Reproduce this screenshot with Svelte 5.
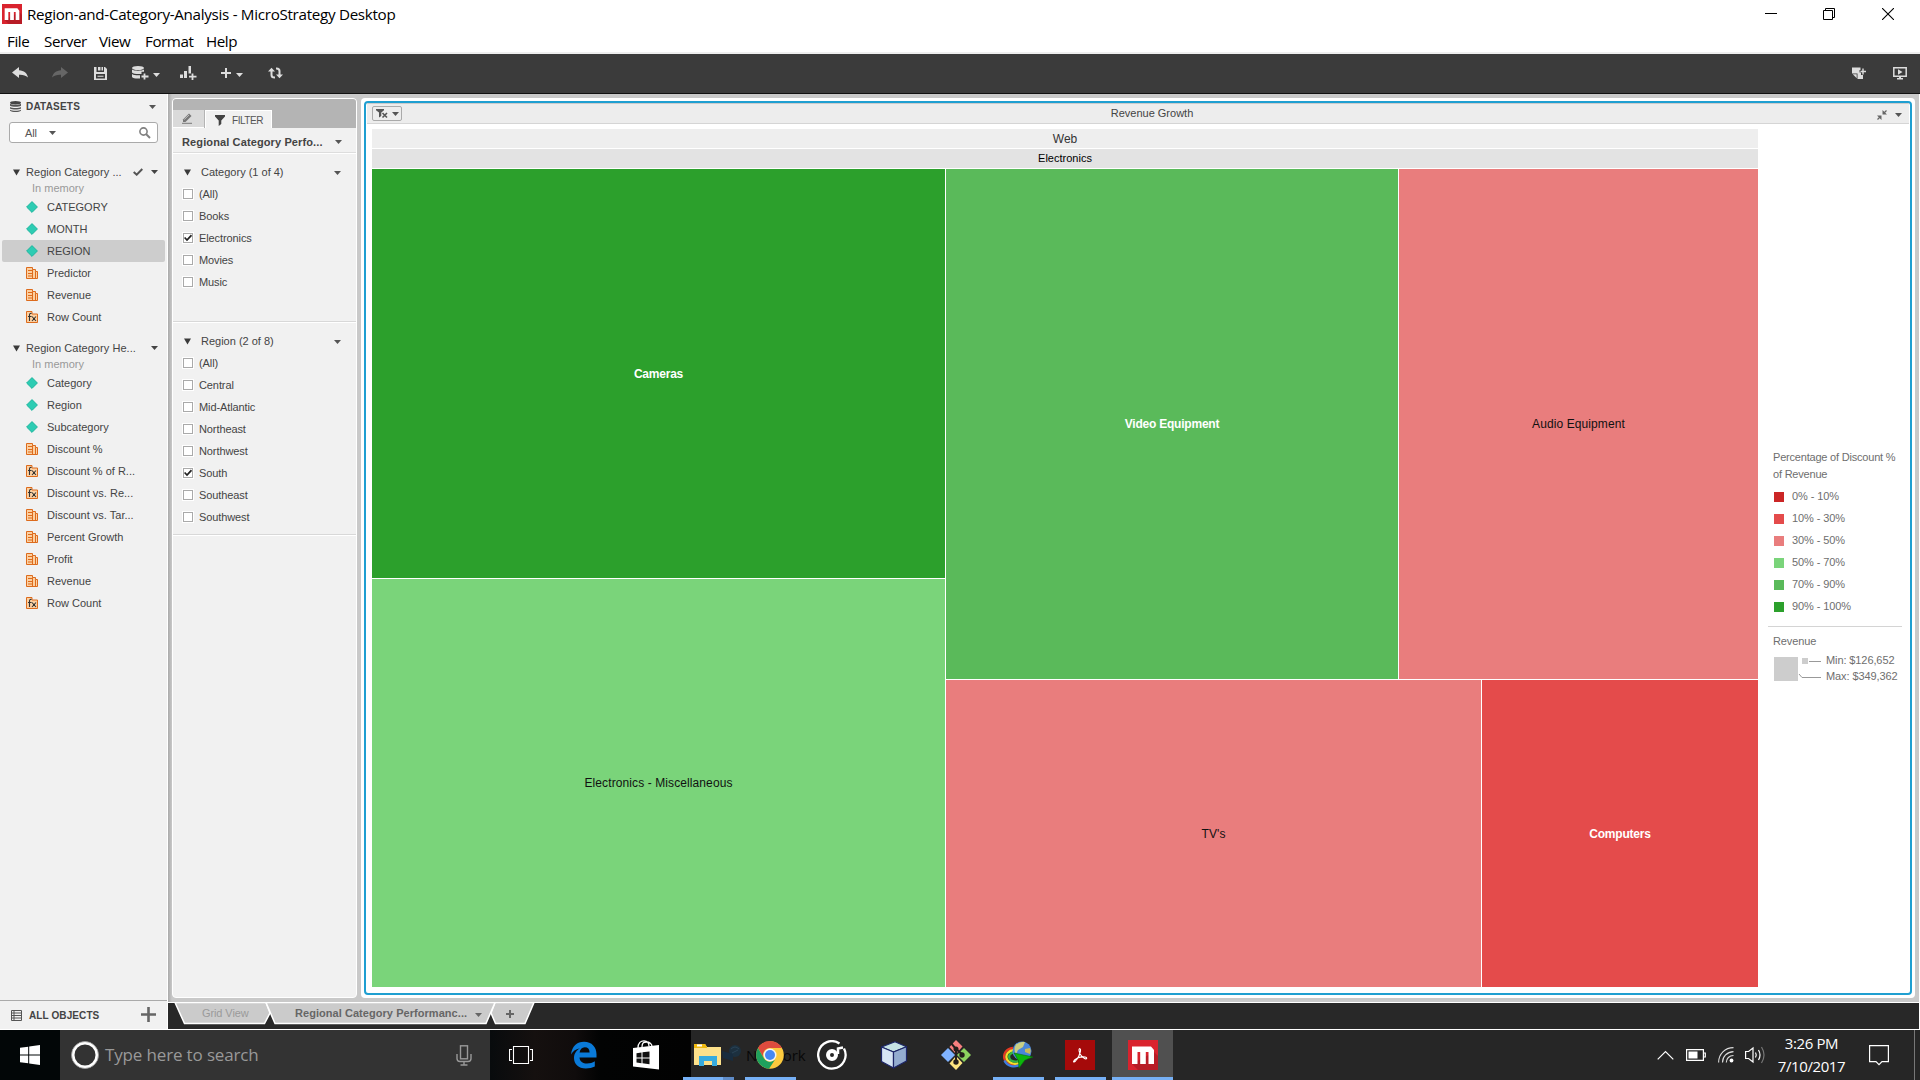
<script>
  const datasets = [
    {
      name: 'Region Category ...',
      checked: true,
      items: [
        ['attr', 'CATEGORY'],
        ['attr', 'MONTH'],
        ['attr', 'REGION', true],
        ['metric', 'Predictor'],
        ['metric', 'Revenue'],
        ['fx', 'Row Count']
      ]
    },
    {
      name: 'Region Category He...',
      checked: false,
      items: [
        ['attr', 'Category'],
        ['attr', 'Region'],
        ['attr', 'Subcategory'],
        ['metric', 'Discount %'],
        ['fx', 'Discount % of R...'],
        ['fx', 'Discount vs. Re...'],
        ['metric', 'Discount vs. Tar...'],
        ['metric', 'Percent Growth'],
        ['metric', 'Profit'],
        ['metric', 'Revenue'],
        ['fx', 'Row Count']
      ]
    }
  ];
  const filters = [
    { title: 'Category (1 of 4)', on: 'Electronics', cls: 'first', options: ['(All)', 'Books', 'Electronics', 'Movies', 'Music'] },
    {
      title: 'Region (2 of 8)', on: 'South', cls: 'second',
      options: ['(All)', 'Central', 'Mid-Atlantic', 'Northeast', 'Northwest', 'South', 'Southeast', 'Southwest']
    }
  ];
  const legend = [
    ['#cb2626', '0% - 10%'],
    ['#e44b4b', '10% - 30%'],
    ['#e97d7d', '30% - 50%'],
    ['#7ad47a', '50% - 70%'],
    ['#5aba5a', '70% - 90%'],
    ['#2ca02c', '90% - 100%']
  ];
</script>

{#snippet caret()}
  <svg class="caret" width="7" height="4" viewBox="0 0 7 4"><path d="M0 0h7L3.5 4z" fill="currentColor" /></svg>
{/snippet}

{#snippet tri()}
  <svg class="tri" width="7" height="7" viewBox="0 0 7 7"><path d="M0 .5h7L3.5 6.5z" fill="#3a3a3a" /></svg>
{/snippet}

{#snippet logo(size)}
  <svg width={size} height={size} viewBox="0 0 30 30">
    <rect width="30" height="30" fill="#d9232e" />
    <path d="M26 12l4 4v14H10l-6-6z" fill="#b81c26" />
    <path d="M4 24V6.500h19l3 3.500v14h-5.500V12h-2.700v12h-5.600V12H9.500v12z" fill="#fff" />
  </svg>
{/snippet}

<div class="screen">
  <header class="titlebar">
    <span class="applogo">{@render logo(20)}</span>
    <span class="apptitle">Region-and-Category-Analysis - MicroStrategy Desktop</span>
    <div class="winbtns">
      <svg width="12" height="12" viewBox="0 0 12 12"><path d="M0 5.500h12" stroke="#000" /></svg>
      <svg width="12" height="12" viewBox="0 0 12 12"><path d="M.5 2.500h9v9h-9zM2.500 2.500v-2h9v9h-2" fill="none" stroke="#000" /></svg>
      <svg class="close" width="12" height="12" viewBox="0 0 12 12"><path d="M0 0l12 12M12 0L0 12" stroke="#000" stroke-width="1.100" /></svg>
    </div>
  </header>
  <nav class="menubar">
    <span class="m1">File</span><span class="m2">Server</span><span class="m3">View</span><span class="m4">Format</span><span>Help</span>
  </nav>

  <div class="toolbar">
    <svg class="t-undo" width="16" height="12" viewBox="0 0 16 12"><path d="M0 5.500L7 0v3.200c5 .3 8 2.800 9 7.300-2.500-2.300-5-3-9-2.800v3.300z" fill="#ddd" /></svg>
    <svg class="t-redo" width="16" height="12" viewBox="0 0 16 12"><path d="M16 5.500L9 0v3.200C4 3.500 1 6 0 10.500c2.500-2.300 5-3 9-2.800v3.300z" fill="#666" /></svg>
    <svg class="t-save" width="13" height="13" viewBox="0 0 13 13"><path d="M0 0h2.500v5h7.500V0H11l2 2v11H0zM2 7v4.500h9V7z" fill="#ddd" fill-rule="evenodd" /><path d="M4 0h2.500v3.500H4zM7.500 0H9v3.500H7.500zM3.500 8.700h6v1h-6z" fill="#ddd" /></svg>
    <svg class="t-db" width="17" height="14" viewBox="0 0 17 14"><ellipse cx="6" cy="2" rx="6" ry="2" fill="#ddd" /><path d="M0 3.500c2 1.600 10 1.600 12 0v2.300H9.500V8C5 8.300 1 7.800 0 6.500zM0 8c2 1.300 5 1.500 8 1.300v3.200C4 12.800 1 12.300 0 11z" fill="#ddd" /><path d="M12.500 7.500v6M9.500 10.500h7" stroke="#ddd" stroke-width="1.800" /></svg>
    <span class="t-c1">{@render caret()}</span>
    <svg class="t-chart" width="17" height="14" viewBox="0 0 17 14"><path d="M0 8.500h3V12H0zM4 5h3v7H4zM8.500 0H11v7.500H8.500z" fill="#ddd" /><path d="M12.500 7.500v6.500M9 10.700h7.500" stroke="#ddd" stroke-width="1.800" /></svg>
    <svg class="t-plus" width="10" height="10" viewBox="0 0 10 10"><path d="M5 0v10M0 5h10" stroke="#ddd" stroke-width="2" /></svg>
    <span class="t-c2">{@render caret()}</span>
    <svg class="t-sync" width="15" height="12" viewBox="0 0 15 12"><path d="M3.500 4v4q0 2.500 3 2.500H7M11.500 8V4q0-2.500-3-2.500H8" fill="none" stroke="#ddd" stroke-width="2" /><path d="M0 4.500L3.500.700 7 4.500zM8 7.500l3.500 3.800L15 7.500z" fill="#ddd" /></svg>
    <span class="spacer"></span>
    <svg class="t-note" width="14" height="13" viewBox="0 0 14 13"><path d="M0 .500h8.500v2.500H7.500v2.500h1.500V8h2v4H5.500V6.500H0z" fill="#ddd" /><path d="M.8 7.300h3.900v3.900z" fill="#ddd" /><path d="M11 1.500v6M8.500 4.500h5.500" stroke="#ddd" stroke-width="1.400" /></svg>
    <svg class="t-tv" width="14" height="13" viewBox="0 0 14 13"><path d="M.8.800h12.400v8.400H.8z" fill="none" stroke="#ddd" stroke-width="1.500" /><path d="M5 2.200L9.500 5 5 7.700zM4 11h6v1.500H4zM6 9h2v2H6z" fill="#ddd" /></svg>
  </div>

  <main class="work">
    <aside class="datasets">
      <div class="ds-head">
        <svg width="11" height="11" viewBox="0 0 11 11"><ellipse cx="5.500" cy="1.700" rx="5.500" ry="1.700" fill="#444" /><path d="M0 2.800c2 1.400 9 1.400 11 0v2c-2 1.400-9 1.400-11 0zM0 6c2 1.400 9 1.400 11 0v1.500c-2 1.400-9 1.400-11 0zM0 8.700c2 1.400 9 1.400 11 0v1c-2 1.700-9 1.700-11 0z" fill="#555" /></svg>
        <b>DATASETS</b>
        {@render caret()}
      </div>
      <div class="search">
        <span>All</span>{@render caret()}
        <svg class="mag" width="12" height="12" viewBox="0 0 12 12"><circle cx="4.500" cy="4.500" r="3.600" fill="none" stroke="#808080" stroke-width="1.600" /><path d="M7 7l4 4" stroke="#808080" stroke-width="2" /></svg>
      </div>
      {#each datasets as ds}
        <section class="ds">
          <div class="ds-name">
            {@render tri()}<span>{ds.name}</span>
            {#if ds.checked}<svg class="tick" width="10" height="8" viewBox="0 0 10 8"><path d="M.7 4L3.700 6.700 9.300 1" fill="none" stroke="#555" stroke-width="2" /></svg>{/if}
            {@render caret()}
          </div>
          <div class="mem">In memory</div>
          {#each ds.items as [kind, label, sel]}
            <div class="item" class:sel>
              <svg width="12" height="12" viewBox="0 0 12 12">
                {#if kind === 'attr'}
                  <path d="M6 .600L11.400 6 6 11.400.6 6z" fill="#2dccb3" stroke="#1eb59d" />
                {:else}
                  <path d={kind === 'metric' ? 'M.5.500h6v2h3v2h2v7H.5z' : 'M.5.500h5.500v2.500h5.500v8.500H.5z'} fill="#fcd0a1" stroke="#dd6b1c" />
                  {#if kind === 'metric'}
                    <path d="M2 3.500h4M2 6.500h4M2 9h4M6.500 2.500v9M9.500 4.500v7" stroke="#dd6b1c" fill="none" />
                  {:else}
                    <path d="M5.500 2.500q-2-.5-2 1.500v6M2 5.500h3.500M6 5.500l4 4.500M10 5.500L6 10" fill="none" stroke="#333" stroke-width="1.100" />
                  {/if}
                {/if}
              </svg>
              <span>{label}</span>
            </div>
          {/each}
        </section>
      {/each}
      <footer class="all-objects">
        <svg width="11" height="11" viewBox="0 0 11 11"><path d="M.5.500h10v10H.5zM0 3h11M0 5.500h11M0 8h11M3 0v11" fill="none" stroke="#555" /></svg>
        <b>ALL OBJECTS</b>
        <svg class="add" width="15" height="15" viewBox="0 0 15 15"><path d="M7.500 0v15M0 7.500h15" stroke="#666" stroke-width="2.600" /></svg>
      </footer>
    </aside>

    <div class="stage">
      <div class="panels">
        <aside class="filter">
          <div class="ftabs">
            <div class="ftab edit">
              <svg width="12" height="11" viewBox="0 0 12 11"><path d="M1 6.500L7 .500l2.500 2.500-6 6H1z" fill="#777" /><path d="M2.300 6.500L7 2" stroke="#ddd" stroke-width=".7" /><path d="M0 10.300h10" stroke="#777" /></svg>
            </div>
            <div class="ftab active">
              <svg width="10" height="11" viewBox="0 0 10 11"><path d="M0 0h10v1.500L6.300 5.500V9L3.700 11V5.500L0 1.500z" fill="#444" /></svg>
              FILTER
            </div>
          </div>
          <div class="ftitle"><b>Regional Category Perfo...</b>{@render caret()}</div>
          {#each filters as f}
            <section class="fgroup {f.cls}">
              <div class="fhead">{@render tri()}<span>{f.title}</span>{@render caret()}</div>
              {#each f.options as o}
                <div class="opt">
                  <i class="box">{#if o === f.on}<svg width="8" height="8" viewBox="0 0 8 8"><path d="M.6 3.500L3 6 7.500 1.200" fill="none" stroke="#222" stroke-width="1.700" /></svg>{/if}</i>{o}
                </div>
              {/each}
            </section>
          {/each}
        </aside>

        <section class="card">
          <div class="viz">
            <div class="vhead">
              <div class="tx">
                <svg width="13" height="10" viewBox="0 0 13 10"><path d="M0 0h8v1.300L5.300 3.500V7L3 8.500v-5L0 1.300z" fill="#555" /><path d="M6.500 4l4.500 4.500M11 4L6.500 8.500" stroke="#555" stroke-width="1.600" /></svg>
                {@render caret()}
              </div>
              <span class="vtitle">Revenue Growth</span>
              <div class="vtools">
                <svg width="10" height="10" viewBox="0 0 10 10"><path d="M5.500 0v4.500H10zM4.500 10V5.500H0z" fill="#666" /><path d="M6.500 3.500L9.500.5M.5 9.500l3-3" stroke="#666" stroke-width="1.300" /></svg>
                {@render caret()}
              </div>
            </div>
            <div class="vbody">
              <div class="map">
                <div class="h1">Web</div>
                <div class="h2">Electronics</div>
                <div class="tree">
                  <div class="colA">
                    <div class="tile g3 w"><span>Cameras</span></div>
                    <div class="tile g1"><span>Electronics - Miscellaneous</span></div>
                  </div>
                  <div class="colB">
                    <div class="rowTop">
                      <div class="tile g2 w"><span>Video Equipment</span></div>
                      <div class="tile r1"><span>Audio Equipment</span></div>
                    </div>
                    <div class="rowBot">
                      <div class="tile r1"><span>TV's</span></div>
                      <div class="tile r2 w"><span>Computers</span></div>
                    </div>
                  </div>
                </div>
              </div>
              <div class="legend">
                <div class="lt">Percentage of Discount %<br />of Revenue</div>
                {#each legend as [color, label]}
                  <div class="li"><i style="background:{color}"></i>{label}</div>
                {/each}
                <div class="lsize">
                  <div class="ls-t">Revenue</div>
                  <div class="ls-row">
                    <svg width="48" height="26" viewBox="0 0 48 26"><path d="M0 0h24v24H0zM28 1h6v6h-6z" fill="#cdcdcd" /><path d="M35 4.500h12M25 17l3 3.500h19" fill="none" stroke="#999" /></svg>
                    <div class="ls-x"><span>Min: $126,652</span><span>Max: $349,362</span></div>
                  </div>
                </div>
              </div>
            </div>
          </div>
        </section>
      </div>

      <div class="tabs">
        <svg class="tabshape" width="380" height="27" viewBox="0 0 380 27">
          <g fill="#cbcbcb" stroke="#fff" stroke-width="1.500">
            <path d="M8 .5L17.500 21.500H97.500L103 11 99 .5z" />
            <path d="M324 11L328.500 21.500H358L367 .5H328z" />
            <path d="M99 .5L108 21.500H319L328 .5z" />
          </g>
        </svg>
        <span class="tab a">Grid View</span>
        <b class="tab b">Regional Category Performanc...</b>
        <span class="tcar">{@render caret()}</span>
        <svg class="tadd" width="8" height="8" viewBox="0 0 8 8"><path d="M4 0v8M0 4h8" stroke="#666" stroke-width="2" /></svg>
      </div>
    </div>
  </main>

  <footer class="taskbar">
    <div class="start"><svg width="20" height="20" viewBox="0 0 20 20"><path d="M0 2.800L8.200 1.700v7.800H0zM9.200 1.500L20 0v9.500H9.200zM0 10.500h8.200v7.800L0 17.200zM9.200 10.500H20V20L9.200 18.500z" fill="#fff" /></svg></div>
    <div class="cortana">
      <svg width="28" height="28" viewBox="0 0 28 28"><circle cx="14" cy="14" r="12" fill="none" stroke="#fff" stroke-width="3" /><circle cx="14" cy="14" r="13.500" fill="none" stroke="#999" stroke-width=".8" /></svg>
      <span>Type here to search</span>
      <svg class="mic" width="16" height="21" viewBox="0 0 16 21"><rect x="4.500" y=".8" width="7" height="13" fill="none" stroke="#999" stroke-width="1.400" /><path d="M1 9v4.500q0 3 3 3h8q3 0 3-3V9M8 16.500V20M4.500 20h7" fill="none" stroke="#999" stroke-width="1.400" /></svg>
    </div>
    <div class="apps">
      <div class="app"><svg class="tv" width="24" height="20" viewBox="0 0 24 20"><path d="M4.500 1.500h15v17h-15zM3 4.500H.5v11H3M21 4.500h2.500v11H21" fill="none" stroke="#fff" stroke-width="1.100" /></svg></div>
      <div class="app"><svg width="26" height="28" viewBox="0 0 26 28"><path d="M0 13.500C1 5 6 .8 13 .8c8 0 12.500 5.500 12.500 12.500v3.200H8.500c.3 4 3.500 6 7.500 6 3 0 5.500-.8 7.800-2.200v5.200C21.500 26.800 18 27.500 14.800 27.500 7.500 27.500 3 23 3 17c0-4.500 2.500-8 6-9.800C4.500 8 1.500 10.500 0 13.500zM8.600 11.500h10c0-3.500-1.800-5.300-4.800-5.300-3 0-4.800 2.300-5.200 5.300z" fill="#0a7ad8" /></svg></div>
      <div class="app"><svg width="26" height="30" viewBox="0 0 26 30"><path d="M0 8l26-3v24.500L0 26.500z" fill="#fff" /><path d="M5 8C5 2.500 8 .8 11 .8c3.500 0 5 2.500 5 5.500M9 7C9 2.500 11 2 13.500 2 16.500 2 19 4 19 6.500" fill="none" stroke="#fff" stroke-width="1.300" /><path d="M3.500 13.200l5-.7v5h-5zM9.500 12.300l7-.9v6.100h-7zM3.500 18.500h5v4.700l-5-.6zM9.500 18.500h7v5.700l-7-.9z" fill="#111" /></svg></div>
      <div class="app"><u class="two"></u><svg width="28" height="24" viewBox="0 0 28 24"><path d="M0 1h11l2 3h14v18H0z" fill="#fde18b" /><path d="M0 1h11l2 3v1H0z" fill="#f0b90f" /><path d="M3 2.500h5" stroke="#fff" stroke-width="2" /><path d="M5 23V13h18v10h-5v-5h-8v5z" fill="#36abdf" /></svg></div>
      <div class="app">
        <u></u>
        <svg class="dim" width="20" height="18" viewBox="0 0 20 18"><circle cx="13" cy="6" r="6" fill="#1c303f" /><path d="M0 6l11 3v7L1 13z" fill="#182c3e" /><path d="M9 4q4-4 8 0M10 8l6-3" stroke="#2a4356" fill="none" /></svg>
        <span class="ghost">Network</span>
        <svg class="top" width="28" height="28" viewBox="0 0 28 28"><circle cx="14" cy="14" r="13.800" fill="#fcca3e" /><path d="M2 7A13.800 13.800 0 0 1 26 7H14a7 7 0 0 0-6 10.500z" fill="#dd4b3e" /><path d="M2 7A13.800 13.800 0 0 0 13 27.800L19.500 18A7 7 0 0 1 8 17.500z" fill="#1fa15d" /><circle cx="14" cy="14" r="6.500" fill="#f4f4f4" /><circle cx="14" cy="14" r="5" fill="#4688f4" /></svg>
      </div>
      <div class="app"><svg width="30" height="30" viewBox="0 0 30 30"><path d="M22.500 3.500A13.700 13.700 0 1 0 27 8.500" fill="none" stroke="#fff" stroke-width="2.300" /><circle cx="15" cy="15" r="4" fill="none" stroke="#fff" stroke-width="4" /><path d="M21 14V8.500l5-1" fill="none" stroke="#fff" stroke-width="2.500" /></svg></div>
      <div class="app"><svg width="28" height="28" viewBox="0 0 28 28"><g stroke="#1d2668" stroke-width="1.200" stroke-linejoin="round"><path d="M1.500 6L15 .8l11.500 5L13.500 11z" fill="#c5e2e4" /><path d="M1.500 6l12 5v16L1.500 20.500z" fill="#d6e5f4" /><path d="M26.500 5.800V20L13.500 27V11z" fill="#93acd0" /></g></svg></div>
      <div class="app"><svg width="30" height="30" viewBox="0 0 30 30"><path d="M15 0l6.500 6.500L15 14 8.500 7z" fill="#f97f7f" /><path d="M7 8l7 7-7 7-7-7z" fill="#80b3ff" /><path d="M23 8l7 7-7 7-7-7z" fill="#8dd35f" /><path d="M15 16l6.500 7L15 30l-6.500-6.500z" fill="#ffe680" /><path d="M10 3l5 6v15M15 9l7 6" fill="none" stroke="#241f1c" stroke-width="2" /><g fill="#241f1c"><circle cx="15" cy="9" r="2.500" /><circle cx="21" cy="15" r="2.700" /><circle cx="15" cy="22" r="2.700" /></g></svg></div>
      <div class="app"><u></u><svg width="30" height="28" viewBox="0 0 30 28"><g fill="none" stroke-width="2.300"><path d="M10 7C3 8 0 13 1.500 18s8 8.500 15 5" stroke="#e33a22" /><path d="M11 9c-6 1-8.500 4.500-7.300 8.500s7 6.500 12 4.500" stroke="#f3df2c" /><path d="M12 11c-5 1-6.500 3-5.700 6s5 4.500 9 3" stroke="#35b443" /><path d="M1.500 19.500C4 25.500 12 27 17 23.500" stroke="#3c7ee0" /></g><circle cx="19" cy="10" r="9.500" fill="#4a86d8" /><path d="M13 3.500q5-3.500 9-2.500l-2 5-5 3-2 4q-3-5 0-9.500z" fill="#c9cf83" /><path d="M22 8l5-1q1.500 3 0 6l-5-2z" fill="#c9b95b" /><path d="M11 12l19 4-8 3-6 8-.5-7z" fill="#0cb50c" stroke="#0a6d0a" stroke-width=".6" /></svg></div>
      <div class="app"><u></u><svg width="30" height="30" viewBox="0 0 30 30"><rect width="30" height="30" fill="#a50a0a" /><path d="M8.500 21.500c1-3 6-5 11.500-4.500 3 .5 1.500 2.700-.5 1.500-3-1.500-5.500-5.500-5.500-8.500 0-2.200 2-1.500 1.500.8-.6 3.500-3 8-5 10.200-1.200 1.200-2.200 1-2 .5z" fill="none" stroke="#fff" stroke-width="1.100" /></svg></div>
      <div class="app cur"><u></u>{@render logo(30)}</div>
    </div>
    <span class="spacer"></span>
    <div class="tray">
      <svg class="y1" width="17" height="10" viewBox="0 0 17 10"><path d="M.7 9.300L8.500 1.500l7.800 7.800" fill="none" stroke="#fff" stroke-width="1.200" /></svg>
      <svg class="y2" width="20" height="12" viewBox="0 0 20 12"><path d="M.6.600h16.800v10.800H.6zM18 4h1.300v4H18" fill="none" stroke="#fff" stroke-width="1.200" /><path d="M2.500 2.500h9v7h-9z" fill="#fff" /></svg>
      <svg class="y3" width="16" height="16" viewBox="0 0 16 16"><g fill="none" stroke="#ddd" stroke-width="1.100"><path d="M.6 15.500C.6 7 7 .6 15.500.600M4.500 15.500C4.500 9.500 9 5 15.500 4.600M8.300 15.500c0-4 3-7 7.200-7" /></g><circle cx="13.500" cy="13.500" r="1.900" fill="#fff" /></svg>
      <svg class="y4" width="21" height="18" viewBox="0 0 21 18"><path d="M.6 5.500h3L8 2v14L3.600 12.500h-3z" fill="none" stroke="#fff" stroke-width="1.200" /><path d="M10.500 6.500q1.500 2.500 0 5M13.500 4q3 5 0 10" fill="none" stroke="#fff" stroke-width="1.200" /><path d="M16.500 1q5 8 0 16" fill="none" stroke="#777" stroke-width="1.200" /></svg>
      <div class="clock"><span>3:26 PM</span><span>7/10/2017</span></div>
      <svg class="y5" width="20" height="21" viewBox="0 0 20 21"><path d="M.6.600h18.800v16H13l-3 3-3-3H.6z" fill="none" stroke="#fff" stroke-width="1.200" /></svg>
    </div>
  </footer>
</div>

<style>
  :global(body) { background: #fff; overflow: hidden; }
  .screen { width: 1920px; height: 1080px; display: flex; flex-direction: column; font: 11px/22px "Liberation Sans", Arial, sans-serif; color: #444; overflow: hidden; }
  .screen * { box-sizing: border-box; }
  svg { display: block; flex: none; }
  b, span { white-space: nowrap; }
  .spacer { flex: 1; }
  .caret, .tri { flex: none; }
  .titlebar { height: 29px; display: flex; align-items: center; font: 15.200px/26px "Open Sans", "Noto Sans", sans-serif; color: #000; padding: 0 0 1px 2px; }
  .applogo { margin-right: 5px; }
  .apptitle { letter-spacing: -.3px; padding-bottom: 1px; }
  .winbtns { margin-left: auto; display: flex; gap: 46px; padding-right: 26px; }
  .close { margin-left: 1px; }
  .menubar { height: 25px; display: flex; padding-left: 7px; font: 15.200px/25px "Open Sans", "Noto Sans", sans-serif; letter-spacing: -.44px; color: #000; border-bottom: 2px solid #eee; }
  .menubar span { line-height: 24px; }
  .m1 { width: 37px; } .m2 { width: 55px; } .m3 { width: 46px; } .m4 { width: 61px; }
  .toolbar { height: 40px; background: #3b3b3b; border-bottom: 1px solid #111; display: flex; align-items: center; padding: 0 13px 1px 12px; color: #ddd; }
  .t-redo { margin-left: 24px; } .t-save { margin-left: 26px; } .t-db { margin-left: 25px; }
  .t-c1 { margin: 3px 0 0 4px; } .t-chart { margin-left: 20px; } .t-plus { margin-left: 24px; } .t-c2 { margin: 3px 0 0 5px; } .t-sync { margin-left: 25px; } .t-tv { margin-left: 27px; }
  .t-c1, .t-c2 { height: 4px; }

  .work { height: 935px; display: flex; }
  .datasets { width: 168px; background: #f1f1f1; border-right: 1px solid #fff; display: flex; flex-direction: column; color: #555; }
  .ds-head { height: 28px; padding: 0 11px 3px 10px; display: flex; align-items: center; }
  .ds-head b { margin: 0 auto 0 5px; color: #444; font-size: 10px; letter-spacing: .2px; }
  .search { margin: 0 9px 18px; height: 21px; border: 1px solid #aaa; border-radius: 3px; background: #fff; display: flex; align-items: center; padding: 0 6px 0 15px; gap: 12px; }
  .mag { margin-left: auto; }
  .search span { letter-spacing: -.1px; }
  .ds { margin-bottom: 9px; }
  .ds-name { height: 22px; display: flex; align-items: center; padding: 0 9px 0 13px; color: #444; letter-spacing: .05px; }
  .ds-name span { margin: 0 auto 0 6px; }
  .tick { margin-right: 8px; }
  .mem { height: 13px; line-height: 11px; padding-left: 32px; color: #999; letter-spacing: 0; }
  .item { height: 22px; margin: 0 2px; border-radius: 2px; padding-left: 24px; display: flex; align-items: center; gap: 9px; color: #444; }
  .sel { background: #cdcdcd; }
  .all-objects { margin-top: auto; height: 29px; border-top: 1px solid #aaa; display: flex; align-items: center; padding: 1px 11px 0; }
  .all-objects b { margin: 0 auto 0 7px; font-size: 10px; letter-spacing: .1px; color: #444; }
  .add { margin-top: -2px; }

  .stage { flex: 1; background: #c9c9c9; display: flex; flex-direction: column; min-width: 0; border-right: 1px solid #fff; }
  .panels { height: 908px; padding: 4px 4px 4px 4px; display: flex; gap: 4px; background: linear-gradient(90deg, #aaa, #c9c9c9 4px); }
  .filter { width: 185px; border: 1px solid #fff; border-radius: 4px; background: #f1f1f1; overflow: hidden; }
  .ftabs { height: 29px; background: #b4b4b4; display: flex; align-items: flex-end; gap: 1px; }
  .ftab { height: 18px; display: flex; align-items: center; }
  .edit { width: 31px; background: #dadada; padding-left: 9px; border-bottom: 1px solid #fff; }
  .active { width: 67px; background: #f1f1f1; border: 1px solid #fff; border-bottom: 0; padding: 2px 0 0 9px; gap: 7px; font-size: 10px; letter-spacing: -.45px; color: #555; }
  .ftitle { height: 26px; display: flex; align-items: center; justify-content: space-between; padding: 2px 14px 0 9px; letter-spacing: .12px; border-bottom: 1px solid #fff; box-shadow: inset 0 -1px #ddd; color: #555; }
  .ftitle b { color: #444; }
  .fgroup { border-bottom: 1px solid #fff; box-shadow: inset 0 -1px #d8d8d8; }
  .first { height: 169px; padding-top: 7px; }
  .second { height: 213px; padding-top: 7px; }
  .fhead { height: 22px; display: flex; align-items: center; padding: 0 15px 0 11px; color: #555; }
  .fhead span { margin: 0 auto 0 10px; color: #444; }
  .fhead .caret, .fhead :global(.caret) { margin-top: 2px; }
  .opt { height: 22px; display: flex; align-items: center; padding-left: 10px; color: #444; letter-spacing: -.1px; }
  .box { width: 10px; height: 10px; border: 1px solid #aaa; background: #fff; outline: 1px solid #fff; margin-right: 6px; flex: none; }

  .card { flex: 1; background: #fff; border-radius: 4px; padding: 3px; min-width: 0; }
  .viz { height: 894px; border: 2px solid #1f9fd1; border-radius: 4px; overflow: hidden; }
  .vhead { height: 21px; margin: 0 1px; background: #ededed; border-bottom: 1px solid #d5d5d5; border-top: 1px solid #ccc; display: grid; grid-template-columns: 1fr auto 1fr; align-items: center; color: #555; }
  .tx { width: 30px; height: 15px; margin-left: 5px; border: 1px solid #aaa; border-radius: 2px; display: flex; align-items: center; padding-left: 3px; gap: 3px; }
  .vtitle { color: #444; padding-left: 28px; line-height: 18px; margin-top: -1px; }
  .vtools { display: flex; align-items: center; justify-content: flex-end; gap: 8px; padding-right: 7px; padding-top: 2px; }
  .vbody { display: flex; padding: 5px 0 0 6px; }
  .map { width: 1386px; }
  .h1, .h2 { height: 19px; line-height: 19px; text-align: center; color: #333; margin-bottom: 1px; }
  .h1 { background: #eee; font-size: 12px; line-height: 21px; }
  .h2 { background: #e3e3e3; color: #000; }
  .tree { height: 818px; display: flex; gap: 1px; }
  .colA { width: 573px; display: grid; grid-template-rows: 409px 408px; gap: 1px; }
  .colB { flex: 1; display: grid; grid-template-rows: 510px 307px; gap: 1px; }
  .rowTop, .rowBot { display: grid; gap: 1px; }
  .rowTop { grid-template-columns: 452px 359px; }
  .rowBot { grid-template-columns: 535px 276px; }
  .tile { display: flex; align-items: center; justify-content: center; font-size: 12px; letter-spacing: .1px; color: #111; }
  .w { color: #fff; font-weight: bold; letter-spacing: -.22px; }
  .g1 { background: #7ad47a; } .g2 { background: #5aba5a; } .g3 { background: #2ca02c; }
  .r1 { background: #e97d7d; } .r2 { background: #e44b4b; }
  .legend { padding: 320px 0 0 10px; width: 144px; color: #6e6e6e; letter-spacing: -.1px; }
  .lt { line-height: 17px; padding-left: 5px; margin-bottom: 2px; white-space: nowrap; letter-spacing: -.2px; }
  .li { height: 22px; display: flex; align-items: center; padding-left: 6px; gap: 8px; }
  .li i { width: 10px; height: 10px; margin-top: 1px; }
  .lsize { border-top: 1px solid #d4d4d4; margin-top: 9px; padding-top: 3px; }
  .ls-t { padding-left: 5px; }
  .ls-row { display: flex; padding: 5px 0 0 6px; gap: 4px; }
  .ls-x { display: flex; flex-direction: column; line-height: 16px; margin-top: -5px; }

  .tabs { position: relative; height: 27px; background: #282828; border-top: 1px solid #fff; display: flex; align-items: center; }
  .tabshape { position: absolute; left: -1px; top: -1px; }
  .tab, .tcar, .tadd { position: relative; margin-top: -6px; }
  .tcar { height: 4px; margin-top: -3px; }
  .a { color: #9a9a9a; padding-left: 34px; width: 127px; letter-spacing: -.1px; }
  .b { color: #666; width: 181px; letter-spacing: .05px; }
  .tcar { color: #666; margin-left: -1px; }
  .tadd { margin-left: 24px; margin-top: -4px; }

  .taskbar { height: 51px; border-top: 1px solid #fff; background: #262626; display: flex; color: #fff; }
  .start { width: 60px; background: #020607; padding: 15px 0 0 20px; }
  .cortana { width: 430px; background: #333; display: flex; align-items: center; padding: 0 18px 0 11px; font: 17px/50px "Open Sans", "Noto Sans", sans-serif; color: #999; }
  .cortana span { margin: 0 auto 0 6px; letter-spacing: -.15px; }
  .apps { display: flex; padding-left: 1px; background: linear-gradient(90deg, #080b0d, #15100f 45px, #100c0c 85px, #020303 110px, #020202 201px, transparent 201px); }
  .app { position: relative; width: 62px; display: flex; align-items: center; justify-content: center; }
  .tv { margin-left: -3px; }
  .app u { position: absolute; left: 6px; bottom: 0; width: 51px; height: 3px; background: #76b0f5; }
  .app u.two { background: linear-gradient(90deg, #76b0f5 40px, #5f8cc8 40px); }
  .cur { background: #505050; width: 61px; margin-left: 1px; }
  .app.cur u { left: 0; width: 61px; }
  .dim { position: absolute; left: -17px; top: 15px; }
  .ghost { position: absolute; left: 7px; top: 13px; font: 15px/24px "Open Sans", sans-serif; color: #080808; }
  .top { position: relative; }
  .tray { display: flex; align-items: center; margin-right: 5px; border-right: 1px solid #777; padding-right: 25px; }
  .y2 { margin-left: 12px; } .y3 { margin-left: 12px; } .y4 { margin-left: 11px; }
  .clock { width: 94px; padding-right: 3px; display: flex; flex-direction: column; align-items: center; font: 15px/23px "Open Sans", "Noto Sans", sans-serif; letter-spacing: -.4px; }
  .y5 { margin-left: 9px; }
</style>
